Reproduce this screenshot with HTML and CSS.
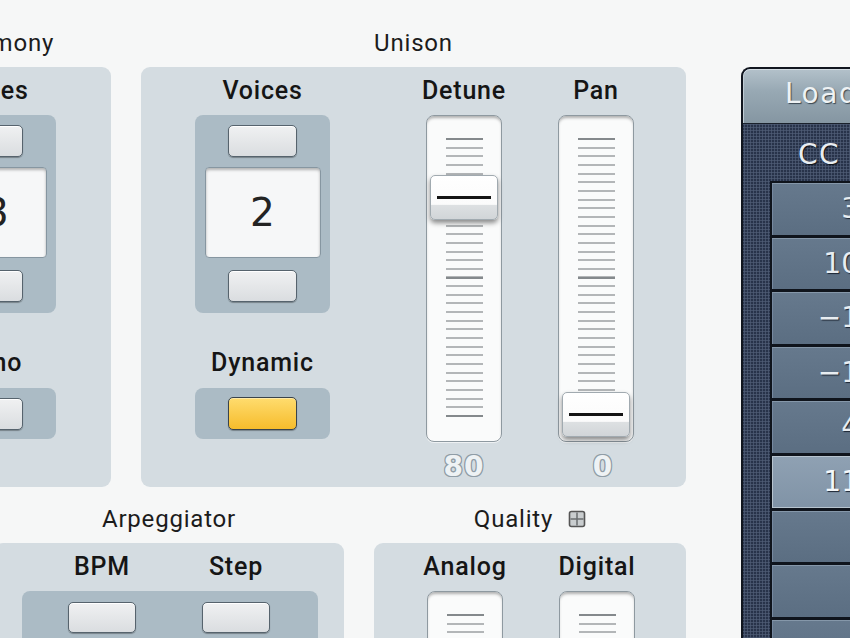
FILE: index.html
```html
<!DOCTYPE html>
<html lang="en">
<head>
<meta charset="utf-8">
<title>Synth panel</title>
<link rel="stylesheet" href="styles.css">
</head>
<body>
<div class="page">
  <div class="main">
    <div class="row row-top">
      <section class="sec">
        <h2 class="title">Harmony</h2>
        <div class="panel panel-harmony">
          <div class="col col-voices">
            <div class="label">Voices</div>
            <div class="box box-stepper">
              <div class="btn"></div>
              <div class="display display-harmony">3</div>
              <div class="btn"></div>
            </div>
            <div class="label label-second">Mono</div>
            <div class="box box-toggle"><div class="btn"></div></div>
          </div>
        </div>
      </section>
      <section class="sec">
        <h2 class="title">Unison</h2>
        <div class="panel panel-unison">
          <div class="col col-voices">
            <div class="label">Voices</div>
            <div class="box box-stepper">
              <div class="btn"></div>
              <div class="display">2</div>
              <div class="btn"></div>
            </div>
            <div class="label label-second">Dynamic</div>
            <div class="box box-toggle"><div class="btn btn-on"></div></div>
          </div>
          <div class="col col-slider">
            <div class="label">Detune</div>
            <div class="track"><div class="ticks"></div><div class="knob" style="top:59px"></div></div>
            <div class="value">80</div>
          </div>
          <div class="col col-slider">
            <div class="label">Pan</div>
            <div class="track"><div class="ticks"></div><div class="knob" style="top:276px"></div></div>
            <div class="value value-pan">0</div>
          </div>
        </div>
      </section>
    </div>
    <div class="row row-bottom">
      <section class="sec">
        <h2 class="title">Arpeggiator</h2>
        <div class="panel panel-arp">
          <div class="arp-labels">
            <div class="label">BPM</div>
            <div class="label">Step</div>
          </div>
          <div class="arp-box">
            <div class="btn"></div>
            <div class="btn"></div>
          </div>
        </div>
      </section>
      <section class="sec">
        <h2 class="title">Quality
          <svg class="qicon" width="18" height="18" viewBox="0 0 18 18" aria-hidden="true">
            <rect x="1.5" y="1.5" width="15" height="15" rx="2" fill="#c9cdcf" stroke="#555" stroke-width="1.6"/>
            <path d="M9 2.5V15.5M2.5 9H15.5" stroke="#6a6d70" stroke-width="1.5"/>
          </svg>
        </h2>
        <div class="panel panel-quality">
          <div class="col col-slider">
            <div class="label">Analog</div>
            <div class="track"><div class="ticks"></div></div>
          </div>
          <div class="col col-slider">
            <div class="label">Digital</div>
            <div class="track"><div class="ticks"></div></div>
          </div>
        </div>
      </section>
    </div>
  </div>
  <aside class="side">
    <div class="load">Load</div>
    <div class="cc-row">CC</div>
    <div class="cells">
      <div class="cell">3</div>
      <div class="cell">10</div>
      <div class="cell">−1</div>
      <div class="cell">−1</div>
      <div class="cell">4</div>
      <div class="cell cell-active">11</div>
      <div class="cell"></div>
      <div class="cell"></div>
      <div class="cell"></div>
    </div>
  </aside>
</div>
</body>
</html>
```

FILE: styles.css
```css
* { box-sizing: border-box; margin: 0; padding: 0; }
html, body { width: 850px; height: 638px; overflow: hidden; }
body {
  background: #f6f7f7;
  font-family: Roboto, "Liberation Sans", sans-serif;
  color: #151515;
}
.page { display: flex; align-items: flex-start; padding-top: 31px; }
.main { flex: none; margin-left: -106px; display: flex; flex-direction: column; gap: 20px; }
.row { display: flex; gap: 30px; }
.row-bottom { padding-left: 100px; }
.sec { display: flex; flex-direction: column; gap: 12px; }
.title {
  font-size: 24px; line-height: 24px; font-weight: 400; letter-spacing: 0.8px;
  color: #1c1c1c; display: flex; justify-content: center; align-items: center; gap: 15px;
  white-space: nowrap;
}
.qicon { display: block; }

.panel { background: #d4dce1; border-radius: 9px; display: flex; padding-top: 12px; }
.panel-harmony { width: 217px; height: 420px; padding-left: 27px; }
.panel-unison { width: 545px; height: 420px; padding-left: 54px; gap: 56px; }
.panel-unison .col-voices { margin-right: 40px; }
.panel-arp { width: 350px; height: 300px; padding-left: 28px; flex-direction: column; }
.panel-quality { width: 312px; height: 300px; padding-left: 53px; gap: 56px; }

.col { display: flex; flex-direction: column; align-items: center; }
.col-voices { width: 135px; }
.col-slider { width: 76px; }

.label {
  font-size: 25px; line-height: 24px; font-weight: 500; letter-spacing: 0.8px;
  white-space: nowrap; text-align: center; margin-bottom: 12px;
}
.label-second { margin-top: 38px; margin-bottom: 13px; }

.box { background: #abbbc5; border-radius: 8px; width: 135px; display: flex; flex-direction: column; align-items: center; }
.box-stepper { height: 198px; padding-top: 10px; }
.box-toggle { height: 51px; justify-content: center; }

.btn {
  width: 69px; height: 32px; border-radius: 5px;
  border: 1px solid #56636d;
  background: linear-gradient(#f0f1f2, #dadde0);
  box-shadow: inset 0 1px 0 #fff, 0 1px 1px rgba(0,0,0,0.3);
  flex: none;
}
.btn-on {
  height: 33px;
  border-color: #3a434b;
  background: linear-gradient(#ffdc6e, #f6bc2c);
  box-shadow: inset 0 1px 0 #ffe9a6, 0 1px 1px rgba(0,0,0,0.3);
}

.display {
  width: 116px; height: 91px; margin: 10px 0 12px; flex: none;
  border-radius: 4px; background: #f6f7f8; border: 1px solid #8696a1;
  box-shadow: inset 0 2px 3px rgba(0,0,0,0.28);
  display: flex; align-items: center; justify-content: center;
  font-family: "DejaVu Sans", sans-serif; font-size: 39px; color: #232323;
}
.display-harmony { padding-left: 16px; }

.track {
  position: relative; width: 76px; height: 327px; flex: none;
  padding-top: 22px; border-radius: 8px;
  background: #fafbfb; border: 1px solid #8e99a0;
  box-shadow: inset 0 3px 3px -1px rgba(0,0,0,0.3), 0 1px 0 rgba(255,255,255,0.6);
}
.ticks {
  width: 37px; height: 279px; margin: 0 auto;
  background:
    linear-gradient(#84898c, #84898c) 0 0 / 100% 2px no-repeat,
    linear-gradient(#84898c, #84898c) 0 138.5px / 100% 2px no-repeat,
    linear-gradient(#84898c, #84898c) 0 277px / 100% 2px no-repeat,
    repeating-linear-gradient(#b3b6b8 0 2px, transparent 2px 8.656px);
}
.knob {
  position: absolute; left: 3px; width: 68px; height: 45px;
  border-radius: 5px; border: 1px solid #a1aab0;
  background: linear-gradient(#ffffff 0, #fbfbfb 66%, #dde0e2 68%, #d1d5d8 100%);
  box-shadow: 0 3px 5px rgba(0,0,0,0.45);
}
.knob::after {
  content: ""; position: absolute; left: 6px; right: 6px; top: 20px; height: 3px;
  background: #141414;
}
.value {
  margin-top: 13px; font-family: "DejaVu Sans", sans-serif; font-weight: bold;
  font-size: 28px; line-height: 24px; letter-spacing: 1px; color: #eef2f4;
  text-shadow: 1px 0 0 #909da6, -1px 0 0 #909da6, 0 1px 0 #909da6, 0 -1px 0 #909da6,
    1px 1px 0 #909da6, -1px -1px 0 #909da6, 1px -1px 0 #909da6, -1px 1px 0 #909da6;
}
.value-pan { padding-left: 14px; }

.arp-labels { display: flex; gap: 66px; padding-left: 46px; }
.arp-labels .label { width: 68px; }
.arp-box {
  width: 296px; height: 200px; background: #abbbc5; border-radius: 8px;
  display: flex; gap: 66px; align-items: flex-start; padding: 11px 0 0 46px;
}
.arp-box .btn { width: 68px; height: 31px; }

.side {
  flex: none; width: 160px; height: 640px; margin: 36px 0 0 55px;
  border: 2px solid #11161f; border-right: 0; border-bottom: 0; border-radius: 9px 0 0 0;
  background: radial-gradient(circle at 1.5px 1.5px, #4d5a73 0.9px, transparent 1.3px) 0 0 / 3px 3px, #28334a;
  overflow: hidden; display: flex; flex-direction: column;
  font-family: "DejaVu Sans", sans-serif; color: #e8edf1;
}
.load {
  flex: none; height: 55px; padding-left: 42px;
  background: linear-gradient(#b3c1ca, #98a9b4 40%, #8596a2);
  border-radius: 7px 0 0 0; border-bottom: 1px solid #1a212c;
  box-shadow: inset 0 1px 0 #d3dce2, inset 1px 0 0 #c0ccd4;
  font-size: 28px; line-height: 50px; letter-spacing: 1.5px; color: #eef2f4;
  text-shadow: 1px 1px 1px #3b4853;
}
.cc-row {
  flex: none; height: 57px; padding: 4px 0 0 55px;
  font-size: 28px; line-height: 53px; letter-spacing: 1.5px;
  text-shadow: 1px 1px 1px #0c1018;
}
.cells {
  flex: 1; margin-left: 27px; background: #0f141c; padding: 2px 0 0 2px;
  display: flex; flex-direction: column; gap: 3px;
}
.cell {
  flex: none; height: 51.6px; padding-right: 42px; text-align: right;
  font-size: 28px; line-height: 51.6px;
  background: linear-gradient(#66798d, #5b6e82);
  box-shadow: inset 0 1px 0 #8597a9, inset 1px 0 0 #7689a0;
  text-shadow: 1px 1px 1px #1c2532;
}
.cell-active {
  background: linear-gradient(#8fa1b3, #8093a6);
  box-shadow: inset 0 0 0 1px #b7c4cf;
  color: #f4f7f9;
}
```
